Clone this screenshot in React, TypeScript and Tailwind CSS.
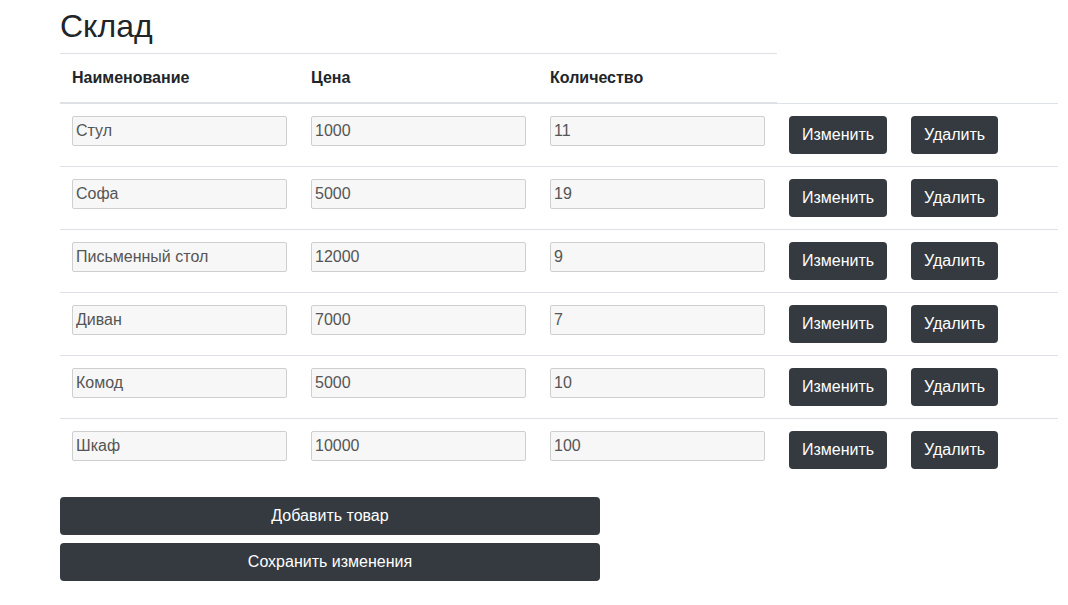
const items = [
  { name: 'Стул', price: '1000', qty: '11' },
  { name: 'Софа', price: '5000', qty: '19' },
  { name: 'Письменный стол', price: '12000', qty: '9' },
  { name: 'Диван', price: '7000', qty: '7' },
  { name: 'Комод', price: '5000', qty: '10' },
  { name: 'Шкаф', price: '10000', qty: '100' },
];

const inputCls =
  'w-[215px] h-[30px] px-[3px] border border-[#cfcfcf] rounded-[2px] bg-[#f7f7f7] text-[#555] text-base outline-none';
const btnCls =
  'h-[38px] px-[13px] rounded bg-[#343a40] text-white text-base leading-6';

export default function App() {
  return (
    <div className="min-h-screen bg-white text-[#212529] font-['Liberation_Sans',Arial,sans-serif]">
      <div className="ml-[60px] w-[998px] pt-[7px]">
        <h2 className="text-[32px] leading-[38px] font-medium mb-2">Склад</h2>

        <table className="w-[998px] table-fixed border-collapse mb-4">
          <colgroup>
            <col className="w-[239px]" />
            <col className="w-[239px]" />
            <col className="w-[239px]" />
            <col className="w-[122px]" />
            <col className="w-[159px]" />
          </colgroup>
          <thead>
            <tr>
              {['Наименование', 'Цена', 'Количество'].map(h => (
                <th
                  key={h}
                  className="text-left font-bold text-base leading-6 p-3 border-t border-t-[#dee2e6] border-b-2 border-b-[#dee2e6]"
                >
                  {h}
                </th>
              ))}
            </tr>
          </thead>
          <tbody>
            {items.map(item => (
              <tr key={item.name}>
                <td className="p-3 align-top border-t border-[#dee2e6]">
                  <input className={inputCls} defaultValue={item.name} />
                </td>
                <td className="p-3 align-top border-t border-[#dee2e6]">
                  <input className={inputCls} defaultValue={item.price} />
                </td>
                <td className="p-3 align-top border-t border-[#dee2e6]">
                  <input className={inputCls} defaultValue={item.qty} />
                </td>
                <td className="p-3 align-top border-t border-[#dee2e6]">
                  <button className={btnCls}>Изменить</button>
                </td>
                <td className="p-3 align-top border-t border-[#dee2e6]">
                  <button className={btnCls}>Удалить</button>
                </td>
              </tr>
            ))}
          </tbody>
        </table>

        <div className="flex flex-col gap-2 w-[540px]">
          <button className="h-[38px] rounded bg-[#343a40] text-white text-base">Добавить товар</button>
          <button className="h-[38px] rounded bg-[#343a40] text-white text-base">Сохранить изменения</button>
        </div>
      </div>
    </div>
  );
}
